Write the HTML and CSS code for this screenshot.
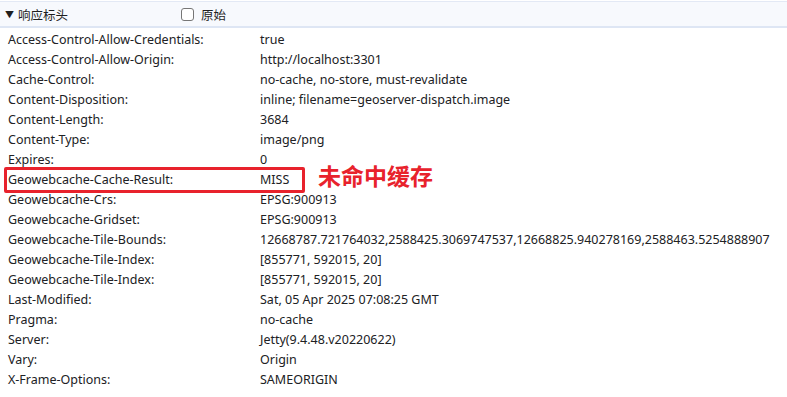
FILE: index.html
```html
<!DOCTYPE html>
<html lang="zh-CN">
<head>
    <meta charset="UTF-8">
    <title>响应标头</title>
    <link rel="stylesheet" href="styles.css">
</head>
<body>
    <div class="section-head">
        <div class="toggle">
            <span class="arrow">▼</span>
            <span>响应标头</span>
        </div>
        <label class="raw">
            <span class="box"></span>
            <span>原始</span>
        </label>
    </div>

    <div class="headers">
        <div class="row"><span class="name">Access-Control-Allow-Credentials:</span><span class="value">true</span></div>
        <div class="row"><span class="name">Access-Control-Allow-Origin:</span><span class="value">http://localhost:3301</span></div>
        <div class="row"><span class="name">Cache-Control:</span><span class="value">no-cache, no-store, must-revalidate</span></div>
        <div class="row"><span class="name">Content-Disposition:</span><span class="value">inline; filename=geoserver-dispatch.image</span></div>
        <div class="row"><span class="name">Content-Length:</span><span class="value">3684</span></div>
        <div class="row"><span class="name">Content-Type:</span><span class="value">image/png</span></div>
        <div class="row"><span class="name">Expires:</span><span class="value">0</span></div>
        <div class="row marked">
            <span class="name">Geowebcache-Cache-Result:</span><span class="value">MISS</span>
            <span class="mark-box"></span>
            <span class="note">未命中缓存</span>
        </div>
        <div class="row"><span class="name">Geowebcache-Crs:</span><span class="value">EPSG:900913</span></div>
        <div class="row"><span class="name">Geowebcache-Gridset:</span><span class="value">EPSG:900913</span></div>
        <div class="row"><span class="name">Geowebcache-Tile-Bounds:</span><span class="value">12668787.721764032,2588425.3069747537,12668825.940278169,2588463.5254888907</span></div>
        <div class="row"><span class="name">Geowebcache-Tile-Index:</span><span class="value">[855771, 592015, 20]</span></div>
        <div class="row"><span class="name">Geowebcache-Tile-Index:</span><span class="value">[855771, 592015, 20]</span></div>
        <div class="row"><span class="name">Last-Modified:</span><span class="value">Sat, 05 Apr 2025 07:08:25 GMT</span></div>
        <div class="row"><span class="name">Pragma:</span><span class="value">no-cache</span></div>
        <div class="row"><span class="name">Server:</span><span class="value">Jetty(9.4.48.v20220622)</span></div>
        <div class="row"><span class="name">Vary:</span><span class="value">Origin</span></div>
        <div class="row"><span class="name">X-Frame-Options:</span><span class="value">SAMEORIGIN</span></div>
    </div>
</body>
</html>
```

FILE: styles.css
```css
* {
    margin: 0;
    padding: 0;
    box-sizing: border-box;
}

body {
    font-family: "Noto Sans", "Noto Sans CJK SC", sans-serif;
    font-size: 12.5px;
    color: #202124;
    background: white;
    width: 787px;
    height: 397px;
    overflow: hidden;
}

.section-head {
    margin-top: 1px;
    height: 27px;
    display: flex;
    align-items: center;
    background: #f7f9fd;
    border-top: 1px solid #e3e9f5;
    border-bottom: 2px solid #dee6f4;
    color: #1f1f1f;
}

.toggle {
    display: flex;
    align-items: center;
    width: 181px;
    padding-left: 5px;
}

.arrow {
    font-size: 9px;
    margin-right: 4px;
}

.raw {
    display: flex;
    align-items: center;
    gap: 7px;
}

.box {
    width: 13px;
    height: 13px;
    border: 1px solid #767676;
    border-radius: 3px;
    background: white;
}

.headers {
    padding-top: 1px;
}

.row {
    position: relative;
    display: flex;
    align-items: center;
    height: 20px;
    padding-left: 8px;
    white-space: nowrap;
}

.name {
    width: 252px;
}

.mark-box {
    position: absolute;
    left: 4px;
    top: -2px;
    width: 301px;
    height: 26px;
    border: 3px solid #e8222c;
    border-radius: 2px;
}

.note {
    position: absolute;
    left: 318px;
    top: -11px;
    font-size: 23px;
    font-weight: 700;
    color: #e8222c;
}
```
